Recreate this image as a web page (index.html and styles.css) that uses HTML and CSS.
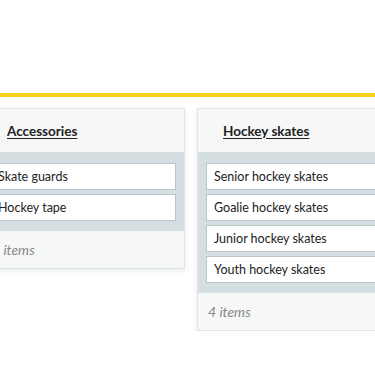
FILE: index.html
```html
<!DOCTYPE html>
<html lang="en">

<head>
    <meta charset="UTF-8">
    <title>Product board</title>
    <meta name="viewport" content="width=device-width, initial-scale=1.0">
    <link rel="stylesheet" href="styles.css">
</head>

<body>
    <div class="top-space"></div>
    <div class="accent-bar"></div>
    <div class="board">
        <div class="list">
            <div class="list-header"><a href="#" class="list-title">Accessories</a></div>
            <div class="list-items">
                <div class="list-item">Skate guards</div>
                <div class="list-item">Hockey tape</div>
            </div>
            <div class="list-footer">2 items</div>
        </div>
        <div class="list">
            <div class="list-header"><a href="#" class="list-title">Hockey skates</a></div>
            <div class="list-items">
                <div class="list-item">Senior hockey skates</div>
                <div class="list-item">Goalie hockey skates</div>
                <div class="list-item">Junior hockey skates</div>
                <div class="list-item">Youth hockey skates</div>
            </div>
            <div class="list-footer">4 items</div>
        </div>
    </div>
</body>

</html>
```

FILE: styles.css
```css
html,
body {
    margin: 0;
    padding: 0;
}

* {
    box-sizing: border-box;
}

body {
    font-family: Lato, 'Open Sans', Arial, sans-serif;
    background: #fff;
    color: #222;
    overflow: hidden;
}

.top-space {
    height: 93px;
}

.accent-bar {
    height: 4px;
    background: #f8d21c;
}

.board {
    display: flex;
    align-items: flex-start;
    gap: 12px;
    padding-top: 11px;
    margin-left: -19px;
}

.list {
    flex: 0 0 204px;
    background: #f6f7f7;
    border: 1px solid #e1e5e6;
    box-shadow: 0 2px 6px rgba(40, 60, 70, 0.10);
}

.list-header {
    height: 43px;
    display: flex;
    align-items: center;
    padding-left: 25px;
}

.list-title {
    color: #222;
    font-weight: 700;
    font-size: 13.5px;
    text-decoration: underline;
    text-underline-offset: 2px;
}

.list-items {
    background: #d5dee0;
    padding: 11px 8px 10px 8px;
    display: flex;
    flex-direction: column;
    gap: 4px;
}

.list-item {
    background: #fff;
    border: 1px solid #b9c4c7;
    height: 27px;
    display: flex;
    align-items: center;
    padding-left: 7px;
    font-size: 12.5px;
    color: #222;
}

.list-footer {
    height: 37px;
    display: flex;
    align-items: center;
    padding-left: 10px;
    font-size: 14px;
    font-style: italic;
    color: #888;
}
```
